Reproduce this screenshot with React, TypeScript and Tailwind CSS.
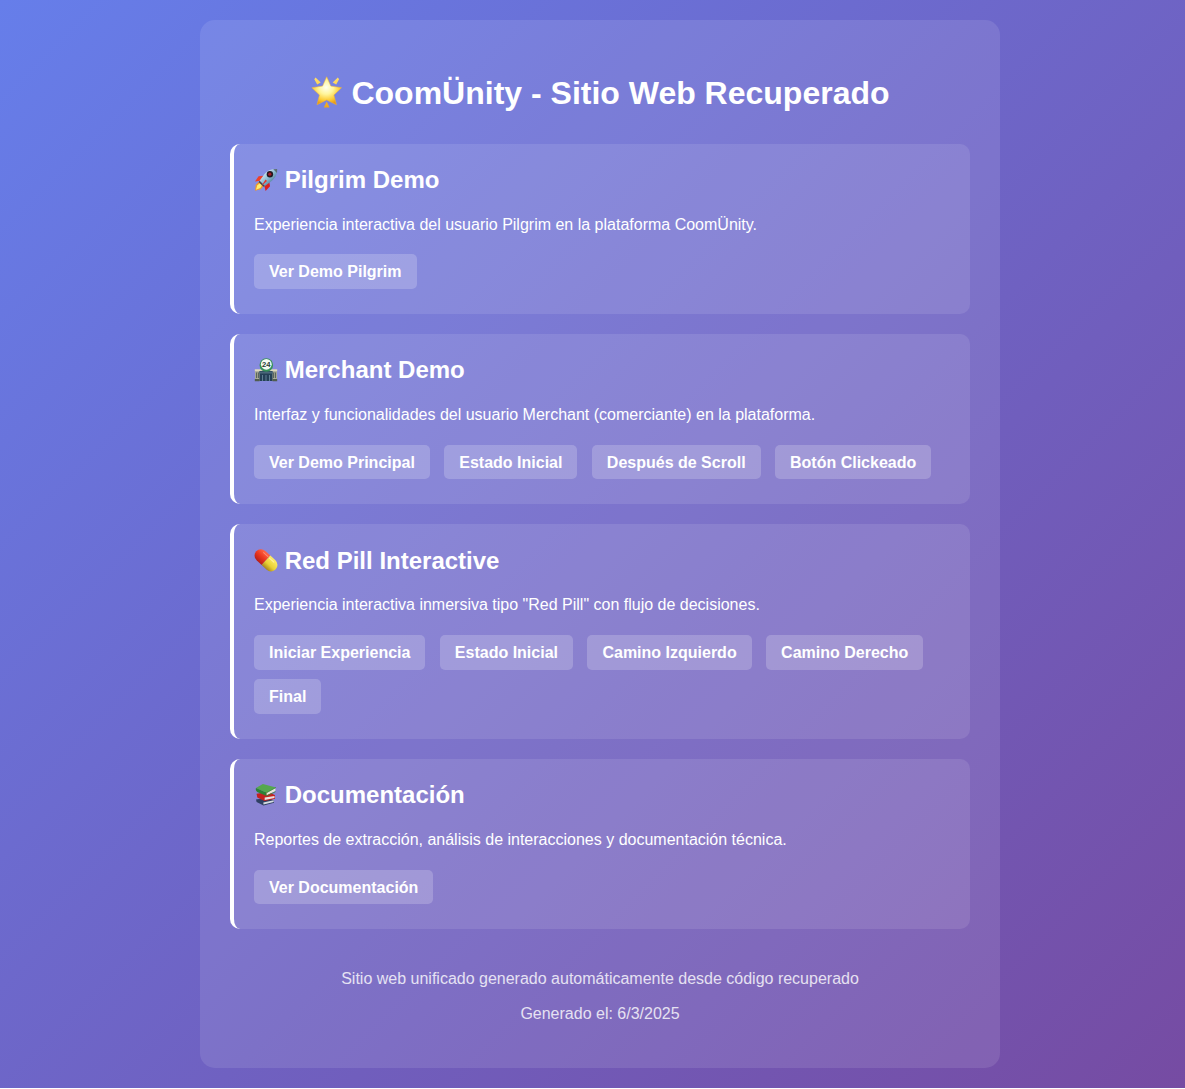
import React from 'react';

function Star() {
  return (
    <svg viewBox="0.8 0.8 31 31" className="relative -top-px left-[0.5px] h-8 w-8 shrink-0" role="img" aria-label="Estrella">
      <defs>
        <radialGradient id="starFill" cx="0.48" cy="0.38" r="0.62">
          <stop offset="0" stopColor="#fffff0" />
          <stop offset="0.4" stopColor="#fff59b" />
          <stop offset="0.75" stopColor="#fccb35" />
          <stop offset="1" stopColor="#e99612" />
        </radialGradient>
        <linearGradient id="rayFill" x2="0" y2="1">
          <stop offset="0" stopColor="#ffe06a" />
          <stop offset="1" stopColor="#efa51b" />
        </linearGradient>
      </defs>
      <path d="M5.2 2.2 10.2 7.2 6.8 9 4 4ZM26.8 2.2 21.8 7.2l3.4 1.8 2.8-5ZM16 25.4l2.8 6h-5.6Z" fill="url(#rayFill)" />
      <path d="M16 1.5 20 10.6 30.4 12.1 23 19.2 25.4 28.6 16 24 6.6 28.6 9 19.2 1.6 12.1 12 10.6Z" fill="url(#starFill)" stroke="#f0b53a" strokeWidth="0.5" strokeLinejoin="round" />
    </svg>
  );
}

function Rocket() {
  return (
    <svg viewBox="0 0 24 24" className="h-6 w-6 shrink-0" role="img" aria-label="Cohete">
      <defs>
        <linearGradient id="rocketBody" x2="1" y2="1">
          <stop offset="0.2" stopColor="#d8edf4" />
          <stop offset="0.5" stopColor="#8dbcd2" />
          <stop offset="0.85" stopColor="#3c6b8c" />
        </linearGradient>
      </defs>
      <path d="M9.5 7.8 4.6 8.2 1 13.4l5.4-.6Z" fill="#ee3f2a" />
      <path d="m15.2 13.5.8 4.8-4.4 4.6-1.2-5Z" fill="#dd1f1d" />
      <path d="m5 13.8-3.2 3L1 22.8l5.8-1.5 3-3.8Z" fill="#f0982a" />
      <path d="m5.8 15.2-2.6 2.4-1.2 4.2 4.2-1.8 2.2-3Z" fill="#ffef6e" />
      <path d="M23.2 1c-5.6-.3-10 1.5-13 5.4L5.6 12.8l5.3 5.2 5.8-4.3C21 10.5 23.3 6.4 23.2 1Z" fill="url(#rocketBody)" />
      <path d="m5.6 12.8 5.3 5.2-1.4.8L4.7 14.2Z" fill="#45484e" />
      <path d="M19.3 1.2 23.2 1 23 4.9Z" fill="#5d6c76" />
      <circle cx="15.9" cy="6.2" r="3.2" fill="#241820" />
      <circle cx="15.8" cy="6.2" r="1.6" fill="#a91c26" />
      <path d="m11.6 11.4-4.4 6.8 5.8-5.2Z" fill="#e73329" />
    </svg>
  );
}

function Store() {
  return (
    <svg viewBox="0 0 24 24" className="h-6 w-6 shrink-0" role="img" aria-label="Tienda 24 horas">
      <path d="M1 12h22v11H1Z" fill="#a5a795" />
      <path d="M.8 11.3h7v1.9h-7ZM16.2 11.3h7v1.9h-7Z" fill="#ddd8bd" />
      <path d="M2 14.5h3v5.5H2ZM19 14.5h3v5.5h-3Z" fill="#59645f" />
      <path d="M3.5 14.5v6M20.5 14.5v6" stroke="#c4c2a8" strokeWidth=".6" />
      <path d="M5.5 13h13v10h-13Z" fill="#243f56" />
      <path d="M5.2 13.6h13.6v2H5.2Z" fill="#49667a" />
      <path d="M8.5 17v6M12 17v6M15.5 17v6" stroke="#7898ac" strokeWidth=".7" />
      <path d="M.8 21h4.7v2.3H.8ZM18.5 21h4.7v2.3h-4.7Z" fill="#515d50" />
      <circle cx="12.3" cy="7" r="6.8" fill="#36925a" />
      <circle cx="12.3" cy="6.3" r="5.4" fill="#f4faf3" />
      <text x="12.3" y="9.1" textAnchor="middle" fontFamily="Liberation Sans" fontWeight="700" fontSize="7.6" fill="#293a32">24</text>
    </svg>
  );
}

function Pill() {
  return (
    <svg viewBox="0 0 24 24" className="h-6 w-6 shrink-0" role="img" aria-label="Cápsula">
      <defs>
        <linearGradient id="redShell" x2="0" y2="1">
          <stop offset="0" stopColor="#ff684b" />
          <stop offset="0.5" stopColor="#ed3920" />
          <stop offset="1" stopColor="#b71d18" />
        </linearGradient>
        <linearGradient id="yellowShell" x2="0" y2="1">
          <stop offset="0" stopColor="#ffed68" />
          <stop offset="0.6" stopColor="#e8d034" />
          <stop offset="1" stopColor="#a8861c" />
        </linearGradient>
      </defs>
      <g transform="translate(0 -0.7) rotate(43 12 12)">
        <path d="M12 5.6H5.1a6.4 6.4 0 0 0 0 12.8H12Z" fill="url(#redShell)" />
        <path d="M12 5.6h6.9a6.4 6.4 0 0 1 0 12.8H12Z" fill="url(#yellowShell)" />
        <path d="M5 8h6" stroke="#ff8a70" strokeWidth="1" strokeLinecap="round" />
        <path d="M13 8h6" stroke="#fff3a0" strokeWidth="1" strokeLinecap="round" />
      </g>
    </svg>
  );
}

function Books() {
  return (
    <svg viewBox="0 0 24 24" className="h-6 w-6 shrink-0" role="img" aria-label="Libros">
      <path d="m2 16.5 12-2 6 3v2.2L9.5 22.6 2.6 19Z" fill="#2f3f63" />
      <path d="m9.3 19.4 10.4-2.2v1.9L9.5 21.6Z" fill="#d5dce2" />
      <path d="m2.6 10.8 12-2 6.4 3.4v3.6L10.6 18 3.3 14.4Z" fill="#c4201f" />
      <path d="m10.7 14.6 9.8-1.7v2L10.7 17Z" fill="#e9dfdf" />
      <path d="M2 5 8.8 1.1 22 4.5 12.6 9.7Z" fill="#55a84d" />
      <path d="m2 5 10.6 4.7v3.4L3.2 9C1.8 8 1.5 6.2 2 5Z" fill="#2b8236" />
      <path d="M12.6 9.7 21.4 5v3l-8.8 4.3Z" fill="#e9e8dc" />
      <path d="M12.6 9.7 22 4.5M12.6 12.9l9-4.2" fill="none" stroke="#3a8a3d" strokeWidth=".8" />
    </svg>
  );
}

type Section = { icon: React.ReactNode; title: string; text: string; links: string[] };

const sections: Section[] = [
  { icon: <Rocket />, title: 'Pilgrim Demo', text: 'Experiencia interactiva del usuario Pilgrim en la plataforma CoomÜnity.', links: ['Ver Demo Pilgrim'] },
  { icon: <Store />, title: 'Merchant Demo', text: 'Interfaz y funcionalidades del usuario Merchant (comerciante) en la plataforma.', links: ['Ver Demo Principal', 'Estado Inicial', 'Después de Scroll', 'Botón Clickeado'] },
  { icon: <Pill />, title: 'Red Pill Interactive', text: 'Experiencia interactiva inmersiva tipo "Red Pill" con flujo de decisiones.', links: ['Iniciar Experiencia', 'Estado Inicial', 'Camino Izquierdo', 'Camino Derecho', 'Final'] },
  { icon: <Books />, title: 'Documentación', text: 'Reportes de extracción, análisis de interacciones y documentación técnica.', links: ['Ver Documentación'] },
];

function Card({ icon, title, text, links }: Section) {
  return (
    <section className="rounded-[10px] border-l-4 border-white bg-white/10 px-5 pt-[20.3px] pb-[25px]">
      <h2 className="flex h-8 items-center gap-[6.7px] text-2xl leading-8 font-bold">
        {icon}
        <span>{title}</span>
      </h2>
      <p className="mt-[15.8px] text-base leading-[26px]">{text}</p>
      <div className="mt-[16.9px] flex flex-wrap gap-x-[14.45px] gap-y-[9.6px]">
        {links.map((link) => (
          <a key={link} href="#" className="h-[34.5px] rounded-[5px] bg-white/20 px-[15px] leading-[36px] font-bold">
            {link}
          </a>
        ))}
      </div>
    </section>
  );
}

export default function App() {
  return (
    <div className="h-[1089px] overflow-hidden bg-white font-['Liberation_Sans',Arial,sans-serif] text-white">
      <div className="h-[1088.3px] w-[1200px] bg-[linear-gradient(135deg,#667eea_0%,#764ba2_100%)] p-5">
        <main className="mx-auto h-[1048.3px] w-[800px] rounded-[15px] bg-white/10 p-[30px]">
          <h1 className="flex h-[93.5px] items-center justify-center gap-[9px] pb-2 text-[32px] font-bold">
            <Star />
            <span>CoomÜnity - Sitio Web Recuperado</span>
          </h1>
          <div className="flex flex-col gap-[19.9px]">
            {sections.map((section) => (
              <Card key={section.title} {...section} />
            ))}
          </div>
          <footer className="mt-[37px] text-center text-base leading-[26px] opacity-80">
            <p>Sitio web unificado generado automáticamente desde código recuperado</p>
            <p className="mt-[9px]">Generado el: 6/3/2025</p>
          </footer>
        </main>
      </div>
    </div>
  );
}
